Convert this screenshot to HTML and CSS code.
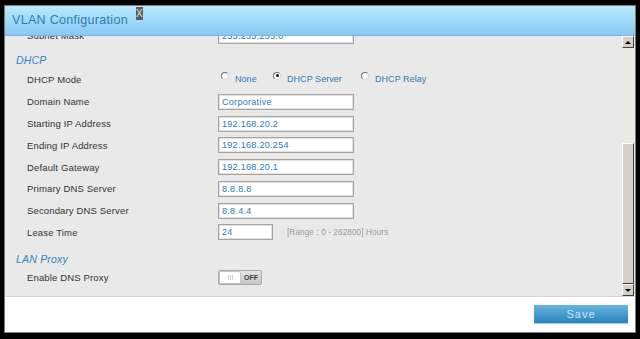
FILE: index.html
```html
<!DOCTYPE html>
<html lang="en">
<head>
<meta charset="UTF-8">
<meta name="viewport" content="width=device-width, initial-scale=1.0">
<title>VLAN Configuration</title>
<link rel="stylesheet" href="styles.css">
</head>
<body>

<div class="dialog">
    <div class="titlebar">
        <span class="title">VLAN Configuration</span>
        <span class="close">X</span>
    </div>

    <div class="main">
        <div class="viewport">
            <div class="content">
                <div class="row">
                    <label>Subnet Mask</label>
                    <input type="text" class="field" value="255.255.255.0">
                </div>

                <h3 class="section dhcp">DHCP</h3>
                <div class="row mode-row">
                    <label>DHCP Mode</label>
                    <div class="radios">
                        <span class="opt opt-none"><span class="radio"></span>None</span>
                        <span class="opt opt-server"><span class="radio checked"></span>DHCP Server</span>
                        <span class="opt"><span class="radio"></span>DHCP Relay</span>
                    </div>
                </div>
                <div class="row">
                    <label>Domain Name</label>
                    <input type="text" class="field" value="Corporative">
                </div>
                <div class="row">
                    <label>Starting IP Address</label>
                    <input type="text" class="field" value="192.168.20.2">
                </div>
                <div class="row">
                    <label>Ending IP Address</label>
                    <input type="text" class="field" value="192.168.20.254">
                </div>
                <div class="row">
                    <label>Default Gateway</label>
                    <input type="text" class="field" value="192.168.20.1">
                </div>
                <div class="row">
                    <label>Primary DNS Server</label>
                    <input type="text" class="field" value="8.8.8.8">
                </div>
                <div class="row">
                    <label>Secondary DNS Server</label>
                    <input type="text" class="field" value="8.8.4.4">
                </div>
                <div class="row">
                    <label>Lease Time</label>
                    <input type="text" class="field short" value="24">
                    <span class="hint">[Range : 0 - 262800] Hours</span>
                </div>

                <h3 class="section lan">LAN Proxy</h3>
                <div class="row">
                    <label>Enable DNS Proxy</label>
                    <div class="toggle">
                        <span class="knob"><span class="grip"></span></span>
                        <span class="off">OFF</span>
                    </div>
                </div>
            </div>
        </div>

        <div class="scrollbar">
            <div class="sb-btn up"></div>
            <div class="sb-track"></div>
            <div class="sb-thumb"></div>
            <div class="sb-btn down"></div>
        </div>
    </div>

    <div class="footer">
        <button class="save">Save</button>
    </div>
</div>

</body>
</html>
```

FILE: styles.css
```css
body {
    margin: 0;
    background-color: #000;
    font-family: "Liberation Sans", Arial, sans-serif;
}

.dialog {
    margin: 5px 0 0 4px;
    width: 632px;
    height: 328px;
    box-sizing: border-box;
    border: 1px solid #7a7a7a;
    background-color: #fff;
    display: flex;
    flex-direction: column;
}

.titlebar {
    height: 30px;
    box-sizing: border-box;
    border-bottom: 1px solid #7ab5dd;
    background: linear-gradient(#b9eafd, #88c8f4);
    display: flex;
    align-items: center;
    padding-left: 7px;
}

.title {
    font-size: 12.5px;
    line-height: 15px;
    letter-spacing: 0.3px;
    color: #2b7db5;
}

.close {
    align-self: flex-start;
    margin: 1px 0 0 8px;
    width: 7px;
    height: 13px;
    background-color: #5c5c5c;
    color: #e2e2e2;
    font-size: 10px;
    line-height: 13px;
    text-align: center;
}

.main {
    height: 260px;
    display: flex;
    background-color: #e9e9e9;
}

.viewport {
    flex: 1;
    overflow: hidden;
}

.content {
    margin-top: -11px;
    padding-left: 11px;
}

.row {
    height: 21.75px;
    display: flex;
    align-items: center;
}

.row label {
    width: 202px;
    box-sizing: border-box;
    padding-left: 11px;
    font-size: 9.5px;
    letter-spacing: 0.15px;
    color: #333;
}

.field {
    width: 136px;
    height: 16px;
    box-sizing: border-box;
    margin: 0;
    padding: 0 0 0 3px;
    border: 1px solid #a3a3a3;
    box-shadow: inset 0 0 0 1px #e2e2e2;
    background-color: #fff;
    font-family: "Liberation Sans", Arial, sans-serif;
    font-size: 9px;
    letter-spacing: 0.3px;
    color: #2a7ab8;
    outline: none;
}

.field.short {
    width: 55px;
}

.hint {
    margin-left: 14px;
    font-size: 8.2px;
    letter-spacing: 0.1px;
    color: #9a9a9a;
}

.section {
    margin: 0;
    font-size: 10.5px;
    line-height: 12px;
    font-style: italic;
    font-weight: normal;
    letter-spacing: 0.2px;
    color: #2a88c4;
}

.section.dhcp {
    margin: 7.15px 0 2.5px;
}

.section.lan {
    margin: 9.65px 0 2.1px;
}

.mode-row {
    margin-bottom: 0.85px;
}

.radios {
    display: flex;
    align-items: center;
    padding-left: 3px;
}

.opt {
    display: flex;
    align-items: center;
    font-size: 9px;
    letter-spacing: 0.05px;
    color: #2a7ab8;
}

.opt-none {
    width: 52px;
}

.opt-server {
    width: 88px;
}

.radio {
    width: 8px;
    height: 8px;
    box-sizing: border-box;
    margin: 0 6px 7px 0;
    border-radius: 50%;
    border: 1px solid;
    border-color: #6e6e6e #d8d8d8 #d8d8d8 #6e6e6e;
    background-color: #fff;
    display: flex;
    align-items: center;
    justify-content: center;
}

.radio.checked::after {
    content: '';
    width: 3px;
    height: 3px;
    border-radius: 50%;
    background-color: #111;
}

.toggle {
    width: 44px;
    height: 15px;
    box-sizing: border-box;
    border: 1px solid #a9a9a9;
    border-radius: 2px;
    background: linear-gradient(#e4e4e4, #c6c6c6);
    display: flex;
}

.knob {
    width: 22px;
    box-sizing: border-box;
    border: 1px solid #c4c4c4;
    border-radius: 2px;
    background-color: #fff;
    display: flex;
    align-items: center;
    justify-content: center;
}

.grip {
    width: 5px;
    height: 5px;
    background: repeating-linear-gradient(90deg, #cfcfcf 0 1px, transparent 1px 2px);
}

.off {
    flex: 1;
    font-size: 7px;
    font-weight: bold;
    line-height: 13px;
    text-align: center;
    color: #3e3e3e;
}

.scrollbar {
    width: 12px;
    margin-right: 1px;
    display: flex;
    flex-direction: column;
}

.sb-btn {
    height: 12px;
    box-sizing: border-box;
    border: 1px solid;
    border-color: #fff #404040 #404040 #fff;
    background-color: #d4d0c8;
    display: flex;
    align-items: center;
    justify-content: center;
}

.sb-btn::before {
    content: '';
    border-left: 3px solid transparent;
    border-right: 3px solid transparent;
}

.sb-btn.up::before {
    border-bottom: 3px solid #000;
}

.sb-btn.down::before {
    border-top: 3px solid #000;
}

.sb-track {
    height: 95px;
    background-color: #ebe9e4;
}

.sb-thumb {
    flex: 1;
    box-sizing: border-box;
    border: 1px solid;
    border-color: #fff #404040 #404040 #fff;
    background-color: #d4d0c8;
}

.footer {
    flex: 1;
    border-top: 1px solid #d6d6d6;
    display: flex;
    justify-content: flex-end;
    align-items: flex-start;
    padding: 8px 7px 0 0;
}

.save {
    width: 94px;
    height: 19px;
    padding: 0;
    border: none;
    border-bottom: 1px solid #9ad2ee;
    background: linear-gradient(#66b5e0, #2b84bc);
    color: #cfe5f4;
    font-family: "Liberation Sans", Arial, sans-serif;
    font-size: 11px;
    letter-spacing: 1px;
}
```
